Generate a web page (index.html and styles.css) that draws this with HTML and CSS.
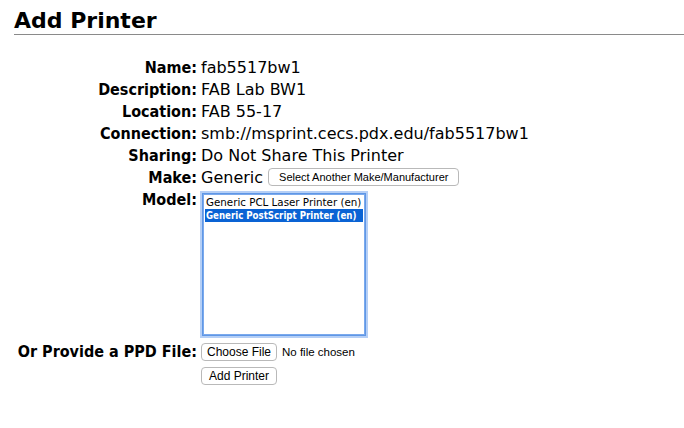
FILE: index.html
```html
<!DOCTYPE html>
<html>
<head>
<meta charset="utf-8">
<link rel="stylesheet" href="styles.css">
</head>
<body>
<h2 class="title">Add Printer</h2>
<div class="form">
  <div class="label">Name:</div><div class="value">fab5517bw1</div>
  <div class="label">Description:</div><div class="value">FAB Lab BW1</div>
  <div class="label">Location:</div><div class="value">FAB 55-17</div>
  <div class="label">Connection:</div><div class="value">smb://msprint.cecs.pdx.edu/fab5517bw1</div>
  <div class="label">Sharing:</div><div class="value">Do Not Share This Printer</div>
  <div class="label">Make:</div><div class="value">Generic<span class="btn btn-make">Select Another Make/Manufacturer</span></div>
  <div class="label label-model">Model:</div>
  <div class="value">
    <div class="listbox">
      <div class="opt">Generic PCL Laser Printer (en)</div>
      <div class="opt opt-sel">Generic PostScript Printer (en)</div>
    </div>
  </div>
  <div class="label label-ppd"><span>Or Provide a PPD File:</span></div>
  <div class="value file-row"><span class="btn btn-big btn-choose">Choose File</span><span class="nofile">No file chosen</span></div>
  <div class="label"></div>
  <div class="value add-row"><span class="btn btn-big">Add Printer</span></div>
</div>
</body>
</html>
```
FILE: styles.css
```css
html, body {
  margin: 0;
  padding: 0;
  background: #fff;
  color: #000;
}
body {
  font-family: "DejaVu Sans", sans-serif;
  padding: 8px 0 0 14px;
}
.title {
  margin: 0;
  font-size: 22px;
  font-weight: bold;
  line-height: 26px;
  border-bottom: 1px solid #8a8a8a;
}
.form {
  display: grid;
  grid-template-columns: 183px auto;
  column-gap: 4px;
  margin-top: 22px;
  font-size: 16px;
  align-items: start;
}
.label {
  display: flex;
  justify-content: flex-end;
  font-family: "DejaVu Sans Condensed", "DejaVu Sans", sans-serif;
  font-weight: bold;
  line-height: 22px;
  white-space: nowrap;
  min-height: 1px;
}
.value {
  line-height: 22px;
  white-space: nowrap;
}
.btn {
  display: inline-block;
  font-family: "Liberation Sans", Arial, sans-serif;
  font-size: 11px;
  line-height: 14px;
  padding: 1px 7px;
  border: 1px solid #b9b9b9;
  border-radius: 4px;
  background: #fff;
  vertical-align: 2px;
  font-weight: normal;
}
.btn-big {
  font-size: 12px;
  padding: 1px 7px;
}
.btn-choose {
  padding: 1px 5px;
}
.btn-make {
  margin-left: 5px;
  padding: 1px 10px;
}
.listbox {
  width: 158px;
  height: 137px;
  border: 1px solid #7ba9ec;
  box-shadow: 0 0 0 1px #5f97e6, 0 0 0 3px #b5cff6;
  margin: 5px 0 0 2px;
  font-size: 10.3px;
  line-height: 13px;
  padding: 1px 1px;
  box-sizing: content-box;
  overflow: hidden;
}
.opt {
  padding: 0 1px;
}
.opt-sel {
  background: #0a63d4;
  color: #fff;
  font-family: "DejaVu Sans Condensed", "DejaVu Sans", sans-serif;
  font-weight: bold;
  font-size: 9.6px;
}
.label-ppd {
  margin-top: 6px;
}
.file-row {
  margin-top: 6px;
}
.nofile {
  font-family: "Liberation Sans", Arial, sans-serif;
  font-size: 11.5px;
  margin-left: 5px;
  vertical-align: 2px;
}
.add-row {
  line-height: 20px;
  margin-top: 3px;
}
```
